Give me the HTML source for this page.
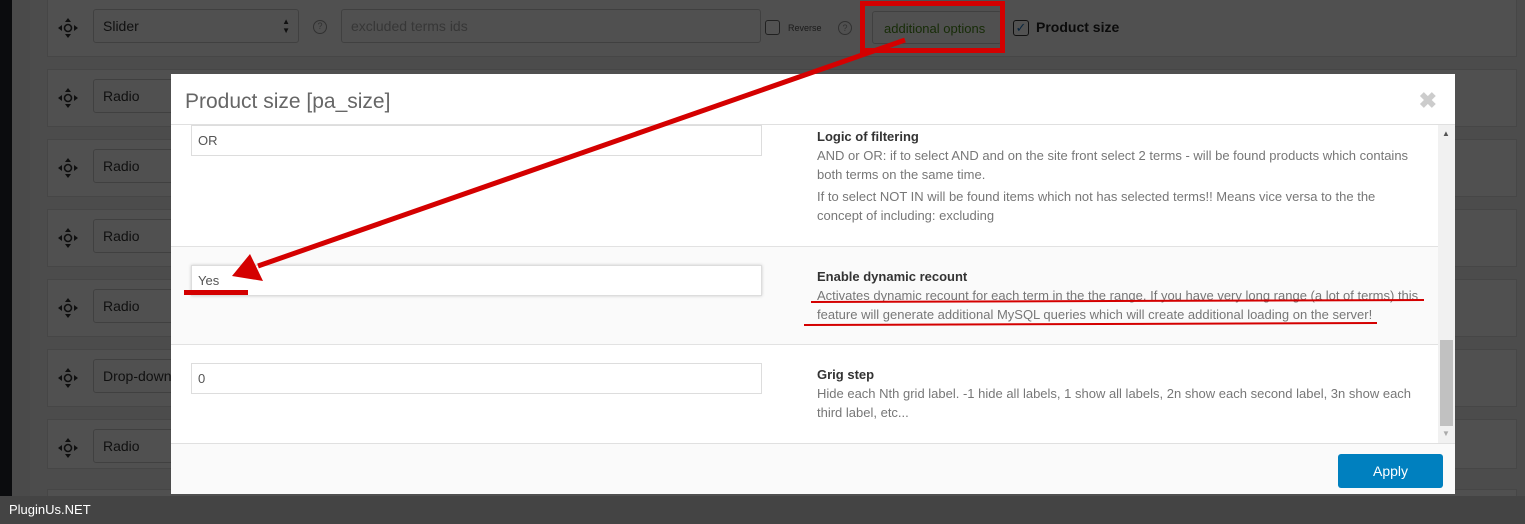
<!DOCTYPE html>
<html style="background:#4b4b4b;height:524px;overflow:hidden"><head><style>
*{box-sizing:border-box;margin:0;padding:0}
body{width:1525px;height:524px;overflow:hidden;background:#4b4b4b;font-family:"Liberation Sans",sans-serif}
#w{position:relative;width:1525px;height:524px;overflow:hidden;background:#ececec}
.abs{position:absolute}
.strip{left:0;top:0;width:12px;height:524px;background:#23282d}
.lcol{left:12px;top:0;width:18px;height:524px;background:#e6e6e6}
.row{left:47px;width:1470px;height:58px;background:#f7f7f7;border:1px solid #d8d8d8}
.sel{left:93px;width:206px;height:34px;border:1px solid #c8c8c8;border-radius:3px;color:#333;font-size:14px;padding:8px 9px;background:#f7f7f7}
.modal{left:171px;top:74px;width:1284px;height:420px;background:#fff}
.inp{position:absolute;left:20px;width:571px;height:31px;border:1px solid #ddd;background:#fff;font-size:13px;color:#555;padding:7px 6px;font-family:"Liberation Sans",sans-serif}
.lbl{position:absolute;left:646px;width:600px;font-family:"Liberation Sans",sans-serif;font-size:13px;color:#777;line-height:19px}
.lbl b{color:#333;font-size:13px}
</style></head><body><div id="w">
<div class="abs strip"></div><div class="abs lcol"></div>
<div class="abs row" style="top:-1px"></div>
<div class="abs row" style="top:69px"></div>
<div class="abs row" style="top:139px"></div>
<div class="abs row" style="top:209px"></div>
<div class="abs row" style="top:279px"></div>
<div class="abs row" style="top:349px"></div>
<div class="abs row" style="top:419px;height:50px"></div>
<div class="abs row" style="top:489px"></div>
<svg class="abs" style="left:0;top:0" width="171" height="524">
<g fill="#333">
<g id="m" transform="translate(68,28)"><circle r="3.5" fill="none" stroke="#333" stroke-width="1.6"/><path d="M-3,-6 L0,-10 L3,-6Z M-3,6 L0,10 L3,6Z M-6,-3 L-10,0 L-6,3Z M6,-3 L10,0 L6,3Z"/></g>
<use href="#m" y="70"/><use href="#m" y="140"/><use href="#m" y="210"/><use href="#m" y="280"/><use href="#m" y="350"/><use href="#m" y="420"/>
</g></svg>
<div class="abs sel" style="top:9px">Slider<span style="position:absolute;right:8px;top:7px;font-size:8px;line-height:9px;color:#333">▲<br>▼</span></div>
<div class="abs sel" style="top:79px">Radio</div>
<div class="abs sel" style="top:149px">Radio</div>
<div class="abs sel" style="top:219px">Radio</div>
<div class="abs sel" style="top:289px">Radio</div>
<div class="abs sel" style="top:359px">Drop-down</div>
<div class="abs sel" style="top:429px">Radio</div>
<div class="abs" style="left:313px;top:20px;width:14px;height:14px;border:1.5px solid #999;border-radius:50%;font-size:9px;color:#999;text-align:center;line-height:11px">?</div>
<div class="abs" style="left:341px;top:9px;width:420px;height:34px;border:1px solid #c8c8c8;border-radius:3px;color:#aaa;font-size:14px;padding:8px 9px;background:#f7f7f7">excluded terms ids</div>
<div class="abs" style="left:765px;top:20px;width:15px;height:15px;border:1px solid #666;border-radius:3px;background:#fff"></div>
<div class="abs" style="left:788px;top:23px;font-size:9px;color:#555">Reverse</div>
<div class="abs" style="left:838px;top:21px;width:14px;height:14px;border:1px solid #999;border-radius:50%;font-size:9px;color:#999;text-align:center;line-height:12px">?</div>
<div class="abs" style="left:872px;top:11px;width:130px;height:33px;border:1px solid #c8c8c8;border-radius:3px;color:#4a8a1a;font-size:13px;padding:9px 11px;background:#f7f7f7">additional options</div>
<div class="abs" style="left:1013px;top:20px;width:16px;height:16px;border:1px solid #333;border-radius:3px;color:#1e73be;font-size:13px;line-height:14px;text-align:center;background:#fff">✓</div>
<div class="abs" style="left:1036px;top:19px;font-size:14px;font-weight:bold;color:#222">Product size</div>
<svg class="abs" style="left:0;top:0" width="1525" height="524"><rect x="0" y="0" width="1525" height="524" fill="#000" fill-opacity="0.68"/></svg>

<div class="abs modal">
 <div style="position:absolute;left:14px;top:16px;font-size:21px;color:#666;font-family:'Liberation Sans',sans-serif">Product size [pa_size]</div>
 <div style="position:absolute;right:18px;top:14px;font-size:22px;color:#ccc;font-weight:bold">✖</div>
 <div style="position:absolute;left:0;top:50px;width:1284px;height:1px;background:#e0e0e0"></div>
 <div style="position:absolute;left:0;top:51px;width:1267px;height:122px;background:#fff;border-bottom:1px solid #e2e2e2"></div>
 <div style="position:absolute;left:0;top:173px;width:1267px;height:98px;background:#fafafa;border-bottom:1px solid #e2e2e2"></div>
 <div class="inp" style="top:51px">OR</div>
 <div class="lbl" style="top:53px;width:605px"><b>Logic of filtering</b><br>AND or OR: if to select AND and on the site front select 2 terms - will be found products which contains both terms on the same time.<div style="margin-top:3px;width:585px">If to select NOT IN will be found items which not has selected terms!! Means vice versa to the the concept of including: excluding</div></div>
 <div class="inp" style="top:191px;box-shadow:0 0 3px #ccc">Yes</div>
 <div class="lbl" style="top:193px;width:615px"><b>Enable dynamic recount</b><br>Activates dynamic recount for each term in the the range. If you have very long range (a lot of terms) this feature will generate additional MySQL queries which will create additional loading on the server!</div>
 <div class="inp" style="top:289px">0</div>
 <div class="lbl" style="top:291px"><b>Grig step</b><br>Hide each Nth grid label. -1 hide all labels, 1 show all labels, 2n show each second label, 3n show each third label, etc...</div>
 <div style="position:absolute;left:1267px;top:51px;width:17px;height:318px;background:#f1f1f1"></div>
 <div style="position:absolute;left:1269px;top:266px;width:13px;height:86px;background:#c1c1c1"></div>
 <div style="position:absolute;left:1271px;top:55px;font-size:8px;color:#555">▲</div>
 <div style="position:absolute;left:1271px;top:355px;font-size:8px;color:#aaa">▼</div>
 <div style="position:absolute;left:0;top:369px;width:1284px;height:51px;background:#fafafa;border-top:1px solid #e0e0e0"></div>
 <div style="position:absolute;left:1167px;top:380px;width:105px;height:34px;background:#0080bf;border-radius:3px;color:#fff;font-size:14px;text-align:center;line-height:34px">Apply</div>
</div>

<svg class="abs" style="left:0;top:0" width="1525" height="524">
<rect x="862.5" y="3.5" width="140" height="47" fill="none" stroke="#d40000" stroke-width="5"/>
<line x1="905" y1="40" x2="258" y2="266" stroke="#d40000" stroke-width="5"/>
<path d="M232,276 L250,254 L263,281Z" fill="#d40000"/>
<rect x="184" y="290" width="64" height="5" fill="#d40000"/>
<line x1="811" y1="302" x2="1424" y2="300" stroke="#d40000" stroke-width="2"/>
<line x1="804" y1="325" x2="1377" y2="323" stroke="#d40000" stroke-width="2"/>
</svg>
<div class="abs" style="left:0;top:496px;width:1525px;height:28px;background:#444;color:#fff;font-size:13px;padding:6px 9px">PluginUs.NET</div>
</div></body></html>
